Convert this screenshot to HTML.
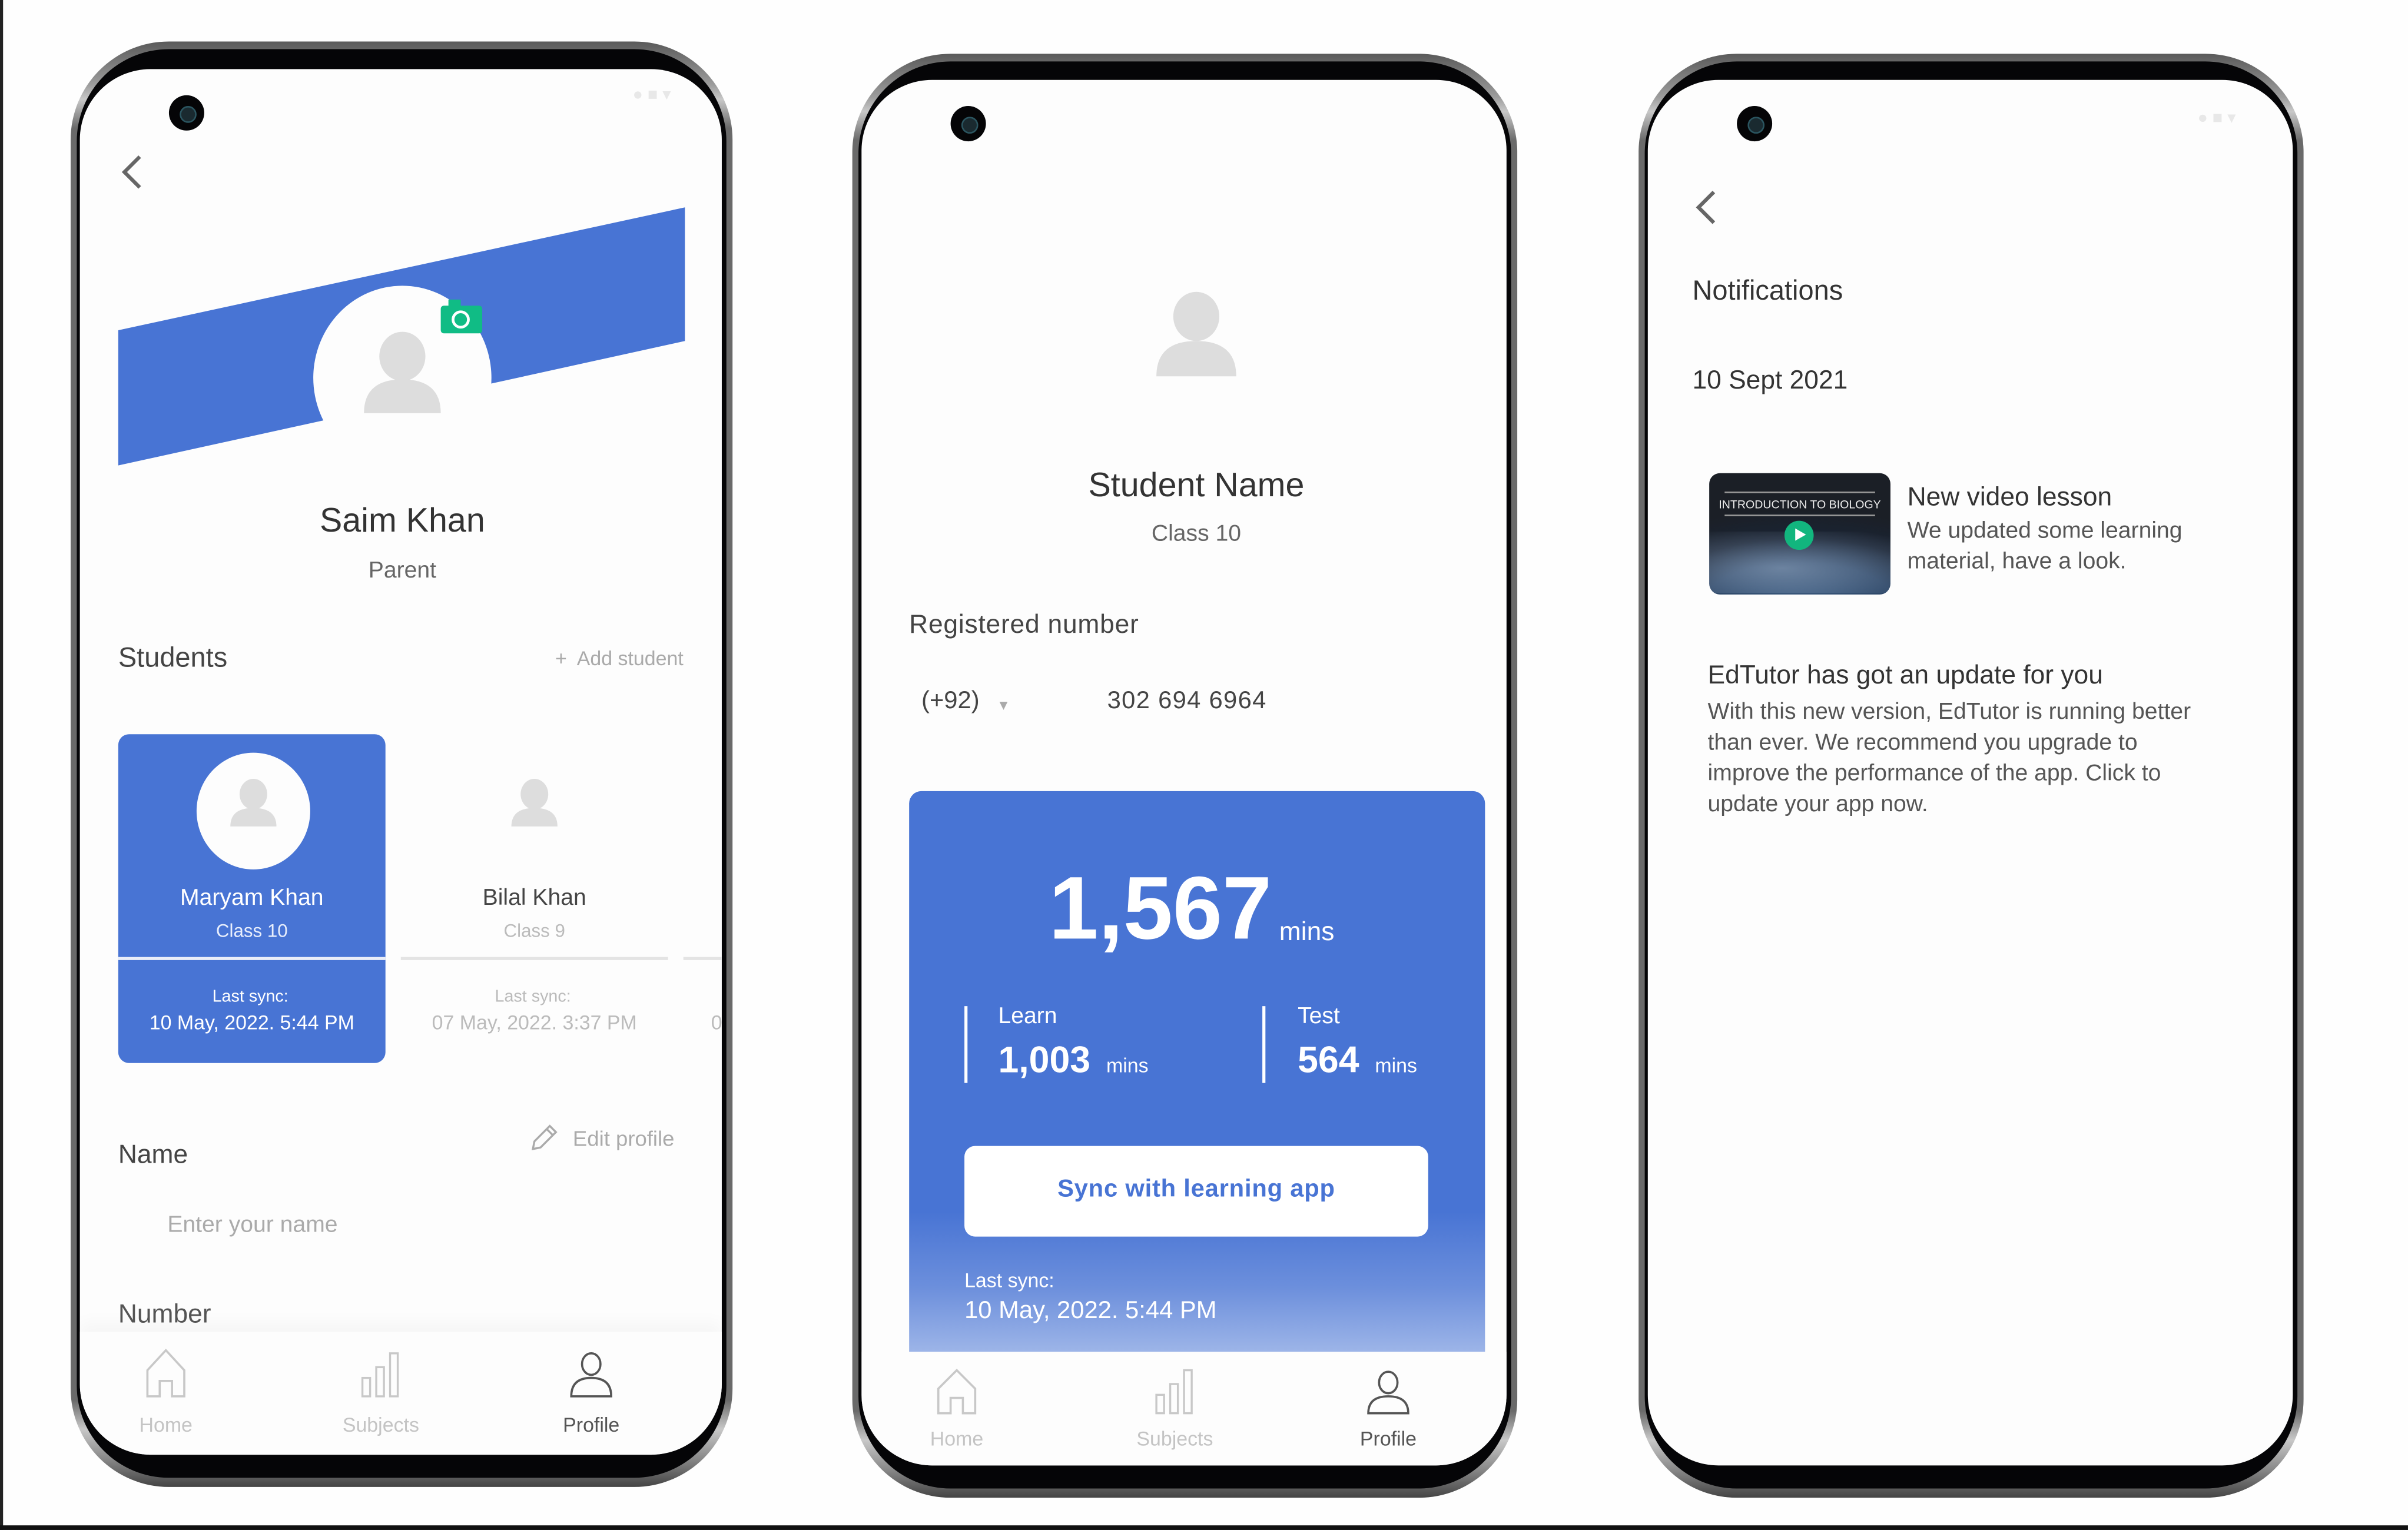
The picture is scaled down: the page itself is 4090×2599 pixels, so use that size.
<!DOCTYPE html>
<html><head><meta charset="utf-8">
<style>
*{margin:0;padding:0;box-sizing:border-box}
html,body{width:4090px;height:2599px;overflow:hidden;background:#fff}
#w{position:absolute;left:0;top:0;width:1568px;height:996px;transform-origin:0 0;transform:scale(2.6084,2.6094);font-family:"Liberation Sans",sans-serif;background:#fefefe}
.phone{position:absolute;border-radius:64px;background:linear-gradient(180deg,#5a5a5a,#9c9c9c 3%,#c8c8c8 4%,#6a6a6a 6%,#6a6a6a 94%,#c8c8c8 96%,#8a8a8a 98%,#444)}
.bez{position:absolute;left:4px;right:4px;top:5px;bottom:6px;border-radius:60px;background:#050507}
.scr{position:absolute;left:6px;right:7px;top:18px;bottom:21px;border-radius:46px;background:#fdfdfd;overflow:hidden}
.t{position:absolute;white-space:nowrap}
.c{transform:translateX(-50%)}
.cam{position:absolute;width:23px;height:23px;border-radius:50%;background:#050507}
.cam:after{content:"";position:absolute;left:7px;top:7px;width:9px;height:9px;border-radius:50%;background:#1a2a30;border:1px solid #2b5560}
.nav{position:absolute;left:0;right:0;background:#fdfdfd}
</style></head><body><div id="w">
<div style="position:absolute;left:0;top:0;width:2px;height:996px;background:#222"></div>
<div style="position:absolute;left:0;top:993px;width:1568px;height:3px;background:#111"></div>

<!-- PHONE 1 -->
<div class="phone" style="left:46px;top:27px;width:431px;height:941px">
<div class="bez"></div>
<div class="scr">
  <div class="cam" style="left:58px;top:17px"></div>
  <div class="t" style="left:360px;top:10px;color:#e8e8e8;font-size:11px">● ■ ▾</div>
  <svg style="position:absolute;left:24px;top:55px" width="20" height="26"><path d="M15 2 L5 12 L15 22" stroke="#666" stroke-width="2.4" fill="none"/></svg>
  <svg style="position:absolute;left:0;top:0" width="418" height="300">
    <polygon points="25,170 394,90 394,177 25,258" fill="#4874D4"/>
    <ellipse cx="210" cy="201" rx="58" ry="60" fill="#fdfdfd"/>
    <ellipse cx="210" cy="187" rx="15" ry="16" fill="#ddd"/>
    <path d="M185 224 Q185 202 210 202 Q235 202 235 224 Z" fill="#ddd"/>
    <rect x="235" y="154" width="27" height="18" rx="2" fill="#10BC85"/>
    <rect x="240" y="150" width="8" height="5" fill="#10BC85"/>
    <circle cx="248" cy="163" r="5" stroke="#fff" stroke-width="1.8" fill="none"/>
  </svg>
  <div class="t c" style="left:210px;top:281px;font-size:22px;color:#333">Saim Khan</div>
  <div class="t c" style="left:210px;top:318px;font-size:15px;color:#666">Parent</div>
  <div class="t" style="left:25px;top:373px;font-size:18px;color:#444">Students</div>
  <div class="t" style="right:25px;top:376px;font-size:13px;color:#aaa">+&nbsp; Add student</div>
  <div style="position:absolute;left:25px;top:433px;width:174px;height:214px;background:#4874D4;border-radius:7px"></div>
  <svg style="position:absolute;left:0;top:430px" width="418" height="220">
    <ellipse cx="113" cy="53" rx="37" ry="38" fill="#fdfdfd"/>
    <ellipse cx="113" cy="42" rx="9" ry="10" fill="#ddd"/>
    <path d="M98 63 Q98 51 113 51 Q128 51 128 63 Z" fill="#ddd"/>
    <ellipse cx="296" cy="42" rx="9" ry="10" fill="#ddd"/>
    <path d="M281 63 Q281 51 296 51 Q311 51 311 63 Z" fill="#ddd"/>
    <rect x="25" y="148" width="174" height="2" fill="#e9edf8"/>
    <rect x="209" y="148" width="174" height="2" fill="#e4e4e4"/>
    <rect x="393" y="148" width="30" height="2" fill="#e4e4e4"/>
  </svg>
  <div class="t c" style="left:112px;top:531px;font-size:15px;color:#fff">Maryam Khan</div>
  <div class="t c" style="left:112px;top:554px;font-size:12px;color:#e8eefc">Class 10</div>
  <div class="t c" style="left:111px;top:598px;font-size:11px;color:#fff">Last sync:</div>
  <div class="t c" style="left:112px;top:613px;font-size:13px;color:#fff">10 May, 2022. 5:44 PM</div>
  <div class="t c" style="left:296px;top:531px;font-size:15px;color:#444">Bilal Khan</div>
  <div class="t c" style="left:296px;top:554px;font-size:12px;color:#bbb">Class 9</div>
  <div class="t c" style="left:295px;top:598px;font-size:11px;color:#bbb">Last sync:</div>
  <div class="t c" style="left:296px;top:613px;font-size:13px;color:#bbb">07 May, 2022. 3:37 PM</div>
  <div class="t" style="left:411px;top:613px;font-size:13px;color:#bbb">0</div>
  <svg style="position:absolute;left:292px;top:686px" width="20" height="20"><path d="M3 17 L4 12 L14 2 L18 6 L8 16 Z M12 4 L16 8" stroke="#aaa" stroke-width="1.3" fill="none"/></svg>
  <div class="t" style="left:321px;top:688px;font-size:14px;color:#aaa">Edit profile</div>
  <div class="t" style="left:25px;top:697px;font-size:17px;color:#444">Name</div>
  <div class="t" style="left:57px;top:744px;font-size:15px;color:#aaa">Enter your name</div>
  <div class="t" style="left:25px;top:801px;font-size:17px;color:#555">Number</div>
  <div class="nav" style="top:822px;height:90px;box-shadow:0 -6px 10px rgba(0,0,0,0.03)">
    <svg style="position:absolute;left:0;top:0" width="418" height="60">
      <path d="M44 42 L44 25 L56 12 L68 25 L68 42 L60 42 L60 32 L52 32 L52 42 Z" stroke="#c8c8c8" stroke-width="1.4" fill="none"/>
      <rect x="184" y="30" width="5" height="12" stroke="#c8c8c8" stroke-width="1.3" fill="none"/>
      <rect x="193" y="23" width="5" height="19" stroke="#c8c8c8" stroke-width="1.3" fill="none"/>
      <rect x="202" y="14" width="5" height="28" stroke="#c8c8c8" stroke-width="1.3" fill="none"/>
      <ellipse cx="333" cy="21" rx="6" ry="7" stroke="#555" stroke-width="1.4" fill="none"/>
      <path d="M320 42 Q320 30 333 30 Q346 30 346 42 Z" stroke="#555" stroke-width="1.4" fill="none"/>
    </svg>
    <div class="t c" style="left:56px;top:53px;font-size:13px;color:#c4c4c4">Home</div>
    <div class="t c" style="left:196px;top:53px;font-size:13px;color:#c4c4c4">Subjects</div>
    <div class="t c" style="left:333px;top:53px;font-size:13px;color:#555">Profile</div>
  </div>
</div></div>

<!-- PHONE 2 -->
<div class="phone" style="left:555px;top:35px;width:433px;height:940px">
<div class="bez"></div>
<div class="scr" style="top:17px">
  <div class="cam" style="left:58px;top:17px"></div>
  <svg style="position:absolute;left:0;top:0" width="418" height="200">
    <ellipse cx="218" cy="154" rx="15" ry="16" fill="#ddd"/>
    <path d="M192 193 Q192 170 218 170 Q244 170 244 193 Z" fill="#ddd"/>
  </svg>
  <div class="t c" style="left:218px;top:251px;font-size:22px;color:#333">Student Name</div>
  <div class="t c" style="left:218px;top:287px;font-size:15px;color:#666">Class 10</div>
  <div class="t" style="left:31px;top:345px;font-size:17px;color:#444;letter-spacing:.3px">Registered number</div>
  <div class="t" style="left:39px;top:396px;font-size:16px;color:#444">(+92)</div>
  <div class="t" style="left:88px;top:402px;font-size:9px;color:#aaa">▼</div>
  <div class="t" style="left:160px;top:396px;font-size:16px;color:#444;letter-spacing:.5px">302 694 6964</div>
  <div style="position:absolute;left:31px;top:463px;width:375px;height:380px;border-radius:8px;background:linear-gradient(180deg,#4874D4 0%,#4874D4 72%,#6c8fdc 85%,#aec2ec 100%)"></div>
  <div class="t" style="left:122px;top:506px;font-size:58px;font-weight:bold;color:#fff">1,567</div>
  <div class="t" style="left:272px;top:545px;font-size:17px;color:#fff">mins</div>
  <div style="position:absolute;left:67px;top:603px;width:2px;height:50px;background:#fff"></div>
  <div style="position:absolute;left:261px;top:603px;width:2px;height:50px;background:#fff"></div>
  <div class="t" style="left:89px;top:601px;font-size:15px;color:#fff">Learn</div>
  <div class="t" style="left:89px;top:625px;font-size:24px;font-weight:bold;color:#fff">1,003 <span style="font-size:13px;font-weight:normal">&nbsp;mins</span></div>
  <div class="t" style="left:284px;top:601px;font-size:15px;color:#fff">Test</div>
  <div class="t" style="left:284px;top:625px;font-size:24px;font-weight:bold;color:#fff">564 <span style="font-size:13px;font-weight:normal">&nbsp;mins</span></div>
  <div style="position:absolute;left:67px;top:694px;width:302px;height:59px;border-radius:7px;background:#fff"></div>
  <div class="t c" style="left:218px;top:714px;font-size:16px;font-weight:bold;color:#4874D4;letter-spacing:.3px">Sync with learning app</div>
  <div class="t" style="left:67px;top:774px;font-size:13px;color:#fff">Last sync:</div>
  <div class="t" style="left:67px;top:793px;font-size:16px;color:#fff">10 May, 2022. 5:44 PM</div>
  <div class="nav" style="top:828px;height:90px">
    <svg style="position:absolute;left:0;top:0" width="418" height="60">
      <path d="M50 40 L50 24 L62 12 L74 24 L74 40 L66 40 L66 30 L58 30 L58 40 Z" stroke="#c8c8c8" stroke-width="1.4" fill="none"/>
      <rect x="192" y="28" width="5" height="12" stroke="#c8c8c8" stroke-width="1.3" fill="none"/>
      <rect x="201" y="21" width="5" height="19" stroke="#c8c8c8" stroke-width="1.3" fill="none"/>
      <rect x="210" y="12" width="5" height="28" stroke="#c8c8c8" stroke-width="1.3" fill="none"/>
      <ellipse cx="343" cy="20" rx="6" ry="7" stroke="#555" stroke-width="1.4" fill="none"/>
      <path d="M330 40 Q330 29 343 29 Q356 29 356 40 Z" stroke="#555" stroke-width="1.4" fill="none"/>
    </svg>
    <div class="t c" style="left:62px;top:49px;font-size:13px;color:#c4c4c4">Home</div>
    <div class="t c" style="left:204px;top:49px;font-size:13px;color:#c4c4c4">Subjects</div>
    <div class="t c" style="left:343px;top:49px;font-size:13px;color:#555">Profile</div>
  </div>
</div></div>

<!-- PHONE 3 -->
<div class="phone" style="left:1067px;top:35px;width:433px;height:940px">
<div class="bez"></div>
<div class="scr" style="top:17px">
  <div class="cam" style="left:58px;top:17px"></div>
  <div class="t" style="left:358px;top:18px;color:#e8e8e8;font-size:11px">● ■ ▾</div>
  <svg style="position:absolute;left:28px;top:71px" width="20" height="26"><path d="M15 2 L5 12 L15 22" stroke="#666" stroke-width="2.4" fill="none"/></svg>
  <div class="t" style="left:29px;top:127px;font-size:18px;color:#333">Notifications</div>
  <div class="t" style="left:29px;top:186px;font-size:17px;color:#333">10 Sept 2021</div>
  <div style="position:absolute;left:40px;top:256px;width:118px;height:79px;border-radius:7px;overflow:hidden;background:radial-gradient(ellipse 120% 80% at 50% 110%,#3a5a80 0%,#2c4565 45%,#1a2434 70%,#1b1f26 100%)">
    <div style="position:absolute;left:0;right:0;top:38px;height:40px;background:radial-gradient(ellipse 90% 70% at 40% 60%,rgba(170,190,215,.5),rgba(0,0,0,0))"></div>
    <div style="position:absolute;left:10px;right:10px;top:12px;height:1px;background:#999"></div>
    <div class="t c" style="left:59px;top:16px;font-size:7.5px;color:#eee">INTRODUCTION TO BIOLOGY</div>
    <div style="position:absolute;left:10px;right:10px;top:27px;height:1px;background:#999"></div>
    <div style="position:absolute;left:49px;top:31px;width:19px;height:19px;border-radius:50%;background:#12B67E"></div>
    <div style="position:absolute;left:56px;top:36px;width:0;height:0;border-left:7px solid #fff;border-top:4.5px solid transparent;border-bottom:4.5px solid transparent"></div>
  </div>
  <div class="t" style="left:169px;top:262px;font-size:17px;color:#333">New video lesson</div>
  <div class="t" style="left:169px;top:285px;font-size:15px;color:#555">We updated some learning</div>
  <div class="t" style="left:169px;top:305px;font-size:15px;color:#555">material, have a look.</div>
  <div class="t" style="left:39px;top:378px;font-size:17px;color:#333">EdTutor has got an update for you</div>
  <div class="t" style="left:39px;top:402px;font-size:15px;color:#555;line-height:20px">With this new version, EdTutor is running better<br>than ever. We recommend you upgrade to<br>improve the performance of the app. Click to<br>update your app now.</div>
</div></div>

</div></body></html>
